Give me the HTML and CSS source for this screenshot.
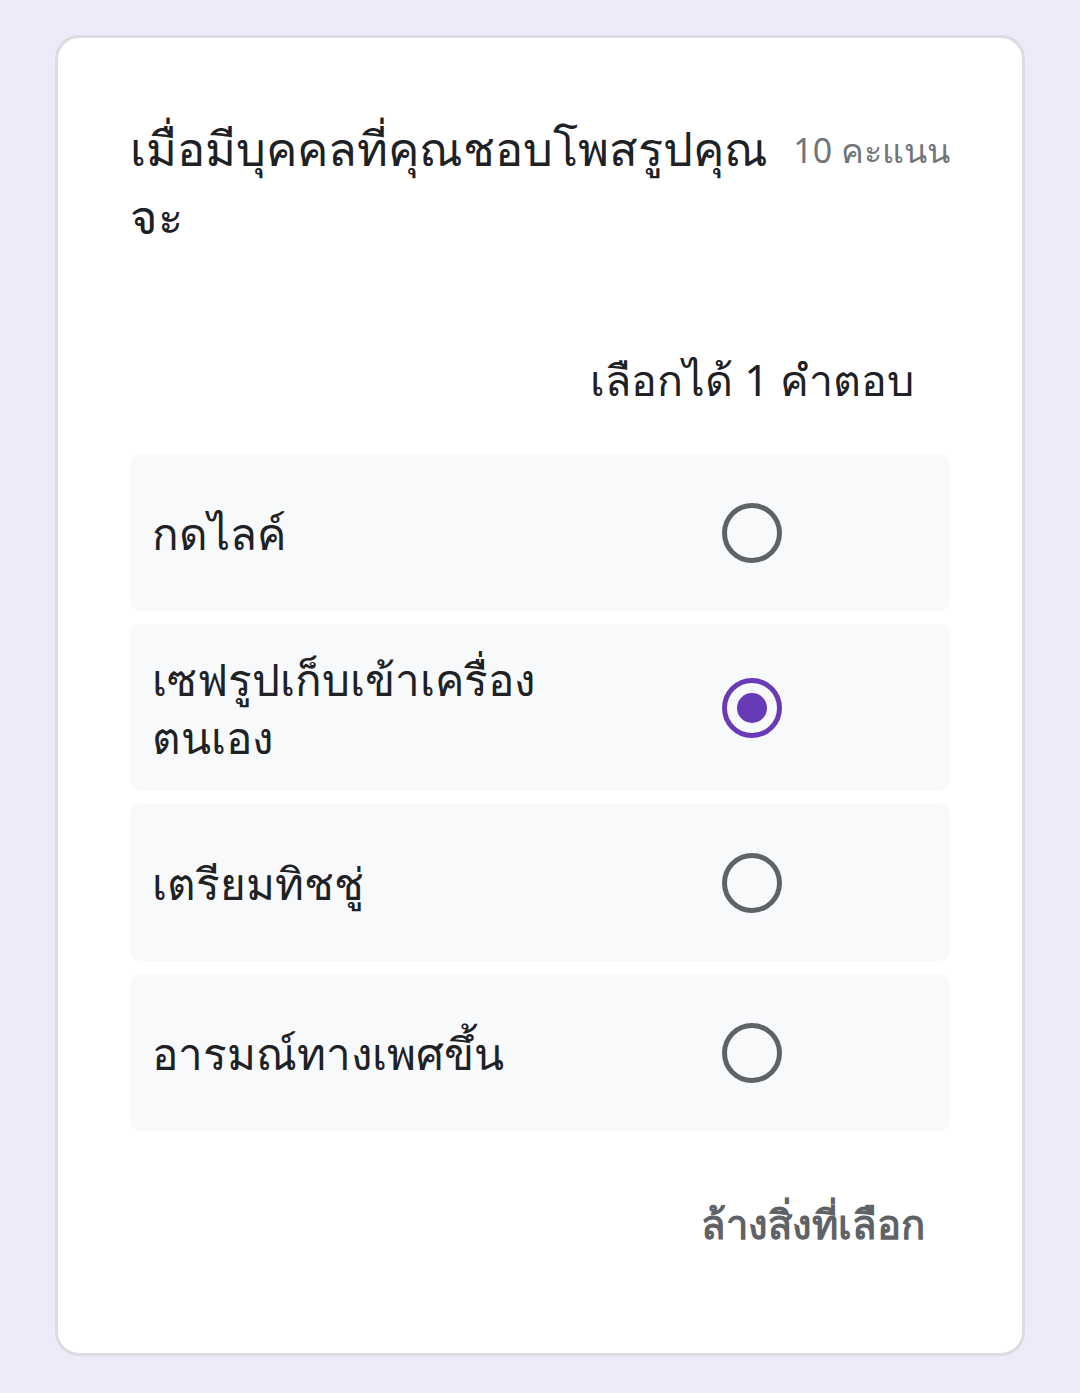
FILE: index.html
```html
<!DOCTYPE html>
<html lang="th">
<head>
<meta charset="utf-8">
<link rel="stylesheet" href="styles.css">
</head>
<body>
<div class="card">
  <div class="question">
    <div class="title"><span class="nowrap">เมื่อมีบุคคลที่คุณชอบโพสรูปคุณ</span> จะ</div>
    <div class="points">10 คะแนน</div>
  </div>
  <div class="grid">
    <div class="head-spacer"></div>
    <div class="head">เลือกได้ 1 คำตอบ</div>
  </div>
  <div class="rows">
    <div class="row">
      <div class="label">กดไลค์</div>
      <div class="cell"><span class="radio"></span></div>
    </div>
    <div class="row tall">
      <div class="label">เซฟรูปเก็บเข้าเครื่อง ตนเอง</div>
      <div class="cell"><span class="radio checked"></span></div>
    </div>
    <div class="row">
      <div class="label">เตรียมทิชชู่</div>
      <div class="cell"><span class="radio"></span></div>
    </div>
    <div class="row">
      <div class="label">อารมณ์ทางเพศขึ้น</div>
      <div class="cell"><span class="radio"></span></div>
    </div>
  </div>
  <div class="footer"><span class="clear">ล้างสิ่งที่เลือก</span></div>
</div>
</body>
</html>
```
FILE: styles.css
```css
html, body {
  margin: 0;
  padding: 0;
}
body {
  background: #efeaf8;
  font-family: "Noto Sans", "Liberation Sans", sans-serif;
  color: #202124;
  padding: 35px 55px 37px 55px;
}
.card {
  background: #fff;
  border: 3px solid #dcdbe2;
  border-radius: 24px;
  padding: 0 72px 0 72px;
  height: 1321px;
  box-sizing: border-box;
}
.question {
  display: flex;
  align-items: flex-start;
  padding-top: 76px;
  gap: 20px;
}
.title {
  flex: 1;
  min-width: 0;
  font-size: 47px;
  line-height: 68px;
}
.nowrap {
  white-space: nowrap;
}
.points {
  font-size: 34px;
  color: #70757a;
  line-height: 68px;
  white-space: nowrap;
  padding-top: 2px;
}
.grid {
  display: grid;
  grid-template-columns: 1fr 396px;
  margin-top: 100px;
}
.head {
  text-align: center;
  font-size: 43px;
  line-height: 60px;
}
.rows {
  display: flex;
  flex-direction: column;
  gap: 13px;
  margin-top: 44px;
}
.row {
  display: grid;
  grid-template-columns: 1fr 396px;
  align-items: center;
  background: #f8f9fa;
  border-radius: 10px;
  min-height: 157px;
}
.row.tall {
  min-height: 167px;
}
.label {
  padding: 20px 0 20px 22px;
  font-size: 44px;
  line-height: 58px;
}
.cell {
  display: flex;
  justify-content: center;
}
.radio {
  width: 60px;
  height: 60px;
  border: 5px solid #5f6368;
  border-radius: 50%;
  box-sizing: border-box;
  display: flex;
  align-items: center;
  justify-content: center;
}
.radio.checked {
  border-color: #673ab7;
}
.radio.checked::after {
  content: "";
  width: 30px;
  height: 30px;
  border-radius: 50%;
  background: #673ab7;
}
.footer {
  display: flex;
  justify-content: flex-end;
  padding-right: 25px;
  margin-top: 68px;
}
.clear {
  font-size: 40px;
  font-weight: 700;
  color: #5f6368;
  line-height: 50px;
}
```
